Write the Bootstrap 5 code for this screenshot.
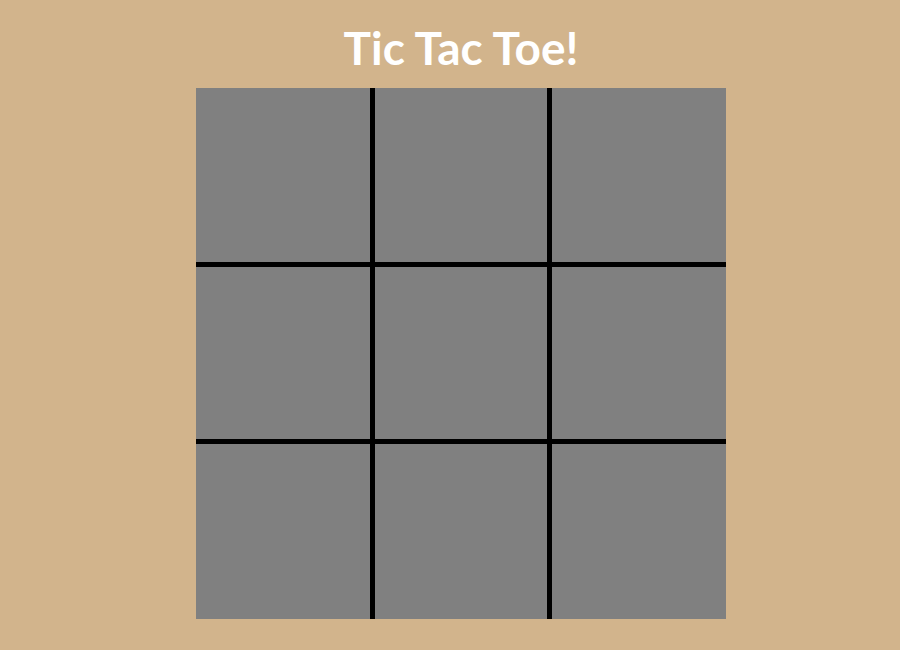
<!DOCTYPE html>
<html lang="en">
<head>
<meta charset="utf-8">
<meta name="viewport" content="width=device-width, initial-scale=1">
<title>Tic Tac Toe!</title>
<link href="https://cdn.jsdelivr.net/npm/bootstrap@5.3.0/dist/css/bootstrap.min.css" rel="stylesheet">
<style>
body { background: tan; font-family: Lato, "Liberation Sans", sans-serif; }
.game { padding: 16px 0 31px 22px; }
.game-title { font-size: 46px; line-height: 64px; margin-bottom: 8px; }
.board {
  width: 100%;
  max-width: 530px;
  gap: 5px;
  grid-template: 174fr 172fr 175fr / 174fr 172fr 174fr;
  aspect-ratio: 530 / 531;
  background: #000;
}
.square { background: gray; }
</style>
</head>
<body>
<main class="game d-flex flex-column align-items-center">
  <h1 class="game-title fw-bold text-white text-center">Tic Tac Toe!</h1>
  <div class="board d-grid" role="group" aria-label="Board">
    <button type="button" class="square border-0 p-0" aria-label="Top left"></button>
    <button type="button" class="square border-0 p-0" aria-label="Top center"></button>
    <button type="button" class="square border-0 p-0" aria-label="Top right"></button>
    <button type="button" class="square border-0 p-0" aria-label="Middle left"></button>
    <button type="button" class="square border-0 p-0" aria-label="Middle center"></button>
    <button type="button" class="square border-0 p-0" aria-label="Middle right"></button>
    <button type="button" class="square border-0 p-0" aria-label="Bottom left"></button>
    <button type="button" class="square border-0 p-0" aria-label="Bottom center"></button>
    <button type="button" class="square border-0 p-0" aria-label="Bottom right"></button>
  </div>
</main>
<script src="https://cdn.jsdelivr.net/npm/bootstrap@5.3.0/dist/js/bootstrap.bundle.min.js"></script>
</body>
</html>
